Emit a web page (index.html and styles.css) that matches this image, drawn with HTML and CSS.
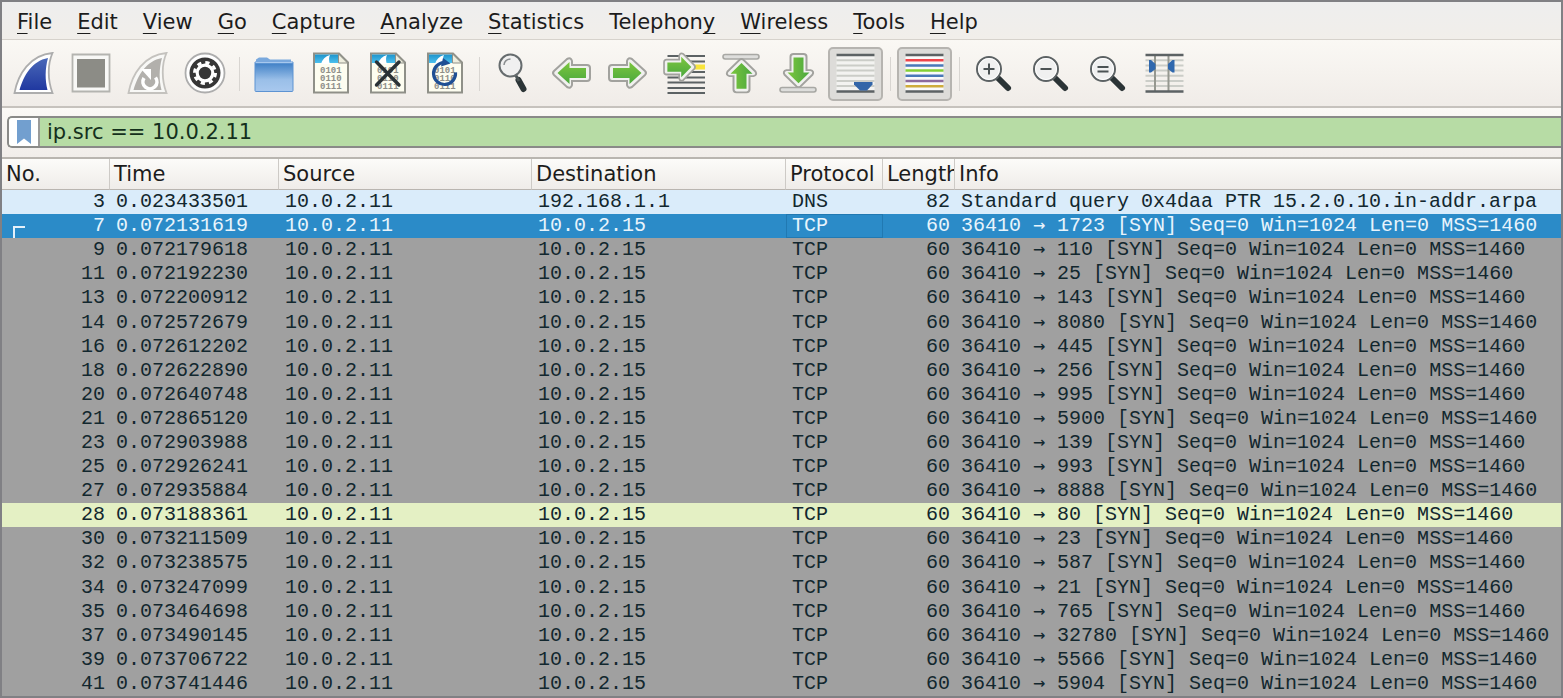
FILE: index.html
```html
<!DOCTYPE html>
<html lang="en">
<head>
<meta charset="utf-8">
<title>Packet capture</title>
<link rel="stylesheet" href="styles.css">
</head>
<body>
<svg class="defs" aria-hidden="true">
  <defs>
    <linearGradient id="g-green" x1="0" y1="0" x2="0" y2="1"><stop offset="0" stop-color="#7cc63e"/><stop offset="1" stop-color="#4aa83e"/></linearGradient>
    <linearGradient id="g-fin" x1="0" y1="0" x2="0" y2="1"><stop offset="0" stop-color="#4a68b8"/><stop offset="1" stop-color="#2038a0"/></linearGradient>
    <linearGradient id="g-folder" x1="0" y1="0" x2="0" y2="1"><stop offset="0" stop-color="#3a7cc4"/><stop offset="0.6" stop-color="#9abfe8"/><stop offset="1" stop-color="#a8c8ee"/></linearGradient>
    <linearGradient id="g-sky" x1="0" y1="0" x2="0" y2="1"><stop offset="0" stop-color="#1e94cc"/><stop offset="1" stop-color="#4cc0ee"/></linearGradient>
    <g id="arrow">
      <path d="M3 16Q3 13 6 13H21V9Q22 5 26 7L39 19Q41 21 39 23L26 35Q22 37 21 33V29H6Q3 29 3 26Z" fill="#f1f1ef" stroke="#a2a29e" stroke-width="2"/>
      <path d="M7 16H23.500V10L35.500 21L23.500 32V26H7Z" fill="url(#g-green)"/>
    </g>
    <g id="doc">
      <path d="M5 1.500H30L39 10.500V40.500H5Z" fill="#fdfdf0" stroke="#8f9088" stroke-width="2"/>
      <path d="M6 2.500H29V11H6Z" fill="url(#g-sky)"/>
      <path d="M12 12Q14 5 21 3Q19 7 21 12Z" fill="#fff"/>
      <path d="M29.500 2V11H38.500Z" fill="#eeeede" stroke="#8f9088"/>
      <text class="bits" x="11" y="21">0101</text>
      <text class="bits" x="11" y="29">0110</text>
      <text class="bits" x="11" y="37">0111</text>
    </g>
    <g id="lens">
      <path d="M27 27L36 36" stroke="#2b3436" stroke-width="6" stroke-linecap="round"/>
      <circle cx="17" cy="17" r="12" fill="#f0f0f0" stroke="#5c6264" stroke-width="2"/>
      <circle cx="17" cy="17" r="10.500" fill="none" stroke="#fff"/>
    </g>
  </defs>
</svg>

<div class="window">
  <nav class="menubar" aria-label="Main menu">
    <button class="menu"><u>F</u>ile</button>
    <button class="menu"><u>E</u>dit</button>
    <button class="menu"><u>V</u>iew</button>
    <button class="menu"><u>G</u>o</button>
    <button class="menu"><u>C</u>apture</button>
    <button class="menu"><u>A</u>nalyze</button>
    <button class="menu"><u>S</u>tatistics</button>
    <button class="menu">Telephon<u>y</u></button>
    <button class="menu"><u>W</u>ireless</button>
    <button class="menu"><u>T</u>ools</button>
    <button class="menu"><u>H</u>elp</button>
  </nav>

  <div class="toolbar" role="toolbar" aria-label="Main toolbar">
    <button class="tool" aria-label="Start capture"><svg class="icon" viewBox="0 0 44 44">
      <path d="M2.500 41C6 22 18 3 40.500 1C35.500 12 35.500 28 40.500 41Z" fill="#fff" stroke="#adadad" stroke-width="1.800"/>
      <path d="M7.500 38C12 23 20 9 36 6C33 17 33 28 35.500 38Z" fill="url(#g-fin)"/></svg></button>
    <button class="tool" aria-label="Stop capture"><svg class="icon" viewBox="0 0 44 44">
      <path d="M3.500 2.500H40.500V39.500H3.500Z" fill="#f8f8f6" stroke="#b4b4b0" stroke-width="1.800"/>
      <path d="M8 7H36V35.500H8Z" fill="#8c8c86"/></svg></button>
    <button class="tool" aria-label="Restart capture"><svg class="icon" viewBox="0 0 44 44">
      <path d="M2.500 41C6 22 18 3 40.500 1C35.500 12 35.500 28 40.500 41Z" fill="#f8f8f6" stroke="#c4c2be" stroke-width="1.800"/>
      <path d="M7.500 38C12 23 20 9 36 6C33 17 33 28 35.500 38Z" fill="#b2b0ac"/>
      <path d="M29.500 25.500A7 7 0 1 1 18 26" fill="none" stroke="#fff" stroke-width="3.600"/>
      <path d="M15 17H25V28Z" fill="#fff"/></svg></button>
    <button class="tool" aria-label="Capture options"><svg class="icon" viewBox="0 0 44 44">
      <circle cx="22" cy="21" r="19.500" fill="#fff" stroke="#adadad" stroke-width="1.800"/>
      <circle cx="22" cy="21" r="15.500" fill="#363636"/>
      <circle cx="22" cy="21" r="10.500" fill="none" stroke="#fff" stroke-width="3" stroke-dasharray="4.200 4.047"/>
      <circle cx="22" cy="21" r="7.800" fill="none" stroke="#fff" stroke-width="3.200"/></svg></button>
    <span class="sep"></span>
    <button class="tool" aria-label="Open file"><svg class="icon" viewBox="0 0 44 44">
      <path d="M4 12V7.500L7 5.500H15L18 7.500H39V12Z" fill="#7aa9dd"/>
      <path d="M3 10H41V38.500Q41 39.500 40 39.500H4Q3 39.500 3 38.500Z" fill="url(#g-folder)" stroke="#5d93d2"/>
      <path d="M3.500 10.500H40.500" stroke="#a7c8ee" stroke-width="1.500"/></svg></button>
    <button class="tool" aria-label="Save file"><svg class="icon" viewBox="0 0 44 44"><use href="#doc"/></svg></button>
    <button class="tool" aria-label="Close file"><svg class="icon" viewBox="0 0 44 44"><use href="#doc"/>
      <path d="M10.500 10L33 33M33 10L10.500 33" stroke="#2a3236" stroke-width="3.400" stroke-linecap="round"/></svg></button>
    <button class="tool" aria-label="Reload file"><svg class="icon" viewBox="0 0 44 44"><use href="#doc"/>
      <path d="M21 10.500A11 11 0 1 0 32.500 20.500" fill="none" stroke="#1f4f94" stroke-width="3.200"/>
      <path d="M20 6L27.500 11.500L18 14.500Z" fill="#1f4f94"/></svg></button>
    <span class="sep"></span>
    <button class="tool" aria-label="Find packet"><svg class="icon" viewBox="0 0 44 44">
      <path d="M26.500 28L31.500 37" stroke="#2b3436" stroke-width="6" stroke-linecap="round"/>
      <path d="M23 22L27 29" stroke="#4b5456" stroke-width="3"/>
      <circle cx="18.500" cy="13.500" r="11" fill="#f0f0f0" stroke="#666c6e" stroke-width="2"/>
      <path d="M12 13Q12.500 7.500 18.500 7" fill="none" stroke="#8a8e90" stroke-width="1.500"/></svg></button>
    <button class="tool" aria-label="Previous packet"><svg class="icon" viewBox="0 0 44 44"><use href="#arrow" transform="matrix(-1 0 0 1 44 0)"/></svg></button>
    <button class="tool" aria-label="Next packet"><svg class="icon" viewBox="0 0 44 44"><use href="#arrow"/></svg></button>
    <button class="tool" aria-label="Go to packet"><svg class="icon" viewBox="0 0 44 44">
      <path d="M4.500 4H42M4.500 9.500H42M4.500 20H42M4.500 25.500H42M4.500 30.500H42M4.500 36H42M4.500 41H42" stroke="#5c6264" stroke-width="2.200"/>
      <path d="M26 15H42" stroke="#f8e43c" stroke-width="5"/>
      <use href="#arrow" transform="matrix(.84 0 0 .93 -1.500 -4.500)"/></svg></button>
    <button class="tool" aria-label="First packet"><svg class="icon" viewBox="0 0 44 44">
      <rect x="3" y="2.500" width="36" height="4.500" rx="2.200" fill="#dededc" stroke="#a8a8a4" stroke-width="1.600"/>
      <use href="#arrow" transform="matrix(0 -.9 1 0 .5 43)"/></svg></button>
    <button class="tool" aria-label="Last packet"><svg class="icon" viewBox="0 0 44 44">
      <use href="#arrow" transform="matrix(0 .9 1 0 .5 -.7)"/>
      <rect x="3" y="35.500" width="36" height="4.500" rx="2.200" fill="#dededc" stroke="#a8a8a4" stroke-width="1.600"/></svg></button>
    <button class="tool tool-on" aria-pressed="true" aria-label="Auto scroll"><svg class="icon" viewBox="0 0 44 44">
      <path d="M2.500 2H40.500V40H2.500Z" fill="#f3f3f1"/>
      <path d="M2.500 8.300H40.500M2.500 13.500H40.500M2.500 18.500H40.500M2.500 23.700H40.500M2.500 29H40.500M2.500 34H40.500" stroke="#cbcdc8" stroke-width="2"/>
      <path d="M2.500 3H40.500M2.500 39.500H40.500" stroke="#5c6264" stroke-width="2.400"/>
      <path d="M20 30H38.500V32.500L33 38.500H26L20 32.500Z" fill="#3265a8"/></svg></button>
    <span class="sep"></span>
    <button class="tool tool-on" aria-pressed="true" aria-label="Colorize packets"><svg class="icon" viewBox="0 0 44 44">
      <path d="M2.500 2H40.500V40H2.500Z" fill="#fafafa"/>
      <path d="M2.500 8.300H40.500" stroke="#f0444a" stroke-width="2.400"/>
      <path d="M2.500 13.500H40.500M2.500 23.700H40.500" stroke="#4a78b8" stroke-width="2.400"/>
      <path d="M2.500 18.500H40.500" stroke="#84d034" stroke-width="2.400"/>
      <path d="M2.500 29H40.500" stroke="#8c6a9c" stroke-width="2.400"/>
      <path d="M2.500 34.200H40.500" stroke="#ceac3c" stroke-width="2.400"/>
      <path d="M2.500 3H40.500M2.500 39.500H40.500" stroke="#5c6264" stroke-width="2.400"/></svg></button>
    <span class="sep"></span>
    <button class="tool" aria-label="Zoom in"><svg class="icon" viewBox="0 0 44 44"><use href="#lens"/><path d="M11.500 17H22.500M17 11.500V22.500" stroke="#4b5254" stroke-width="2"/></svg></button>
    <button class="tool" aria-label="Zoom out"><svg class="icon" viewBox="0 0 44 44"><use href="#lens"/><path d="M11.500 17H22.500" stroke="#4b5254" stroke-width="2"/></svg></button>
    <button class="tool" aria-label="Normal size"><svg class="icon" viewBox="0 0 44 44"><use href="#lens"/><path d="M11.500 15H22.500M11.500 19.500H22.500" stroke="#4b5254" stroke-width="2"/></svg></button>
    <button class="tool" aria-label="Resize columns"><svg class="icon" viewBox="0 0 44 44">
      <path d="M2.500 8.300H40.500M2.500 13.500H40.500M2.500 18.500H40.500M2.500 23.700H40.500M2.500 29H40.500M2.500 34H40.500" stroke="#cbcdc8" stroke-width="2"/>
      <path d="M12 3V39M25.500 3V39" stroke="#969890" stroke-width="2"/>
      <path d="M2.500 3H40.500M2.500 39.500H40.500" stroke="#5c6264" stroke-width="2.400"/>
      <path d="M6 8H8L12.500 12V17L8 20.500H6ZM31.500 8H29.500L25 12V17L29.500 20.500H31.500Z" fill="#3068ae"/></svg></button>
  </div>

  <form class="filterbar">
    <div class="filter">
      <button class="bookmark" type="button" aria-label="Filter bookmarks"><svg class="flag" viewBox="0 0 14 24"><path d="M0 0H14V24L7 18.500L0 24Z" fill="#729fcf"/></svg></button>
      <input class="filter-text" type="text" aria-label="Display filter" value="ip.src == 10.0.2.11">
    </div>
  </form>

  <main class="packets">
    <table class="list">
      <colgroup><col class="c-no"><col class="c-time"><col class="c-source"><col class="c-dest"><col class="c-proto"><col class="c-len"><col></colgroup>
      <thead><tr><th>No.</th><th>Time</th><th>Source</th><th>Destination</th><th>Protocol</th><th>Length</th><th>Info</th></tr></thead>
      <tbody>
        <tr class="dns"><td>3</td><td>0.023433501</td><td>10.0.2.11</td><td>192.168.1.1</td><td>DNS</td><td>82</td><td>Standard query 0x4daa PTR 15.2.0.10.in-addr.arpa</td></tr>
        <tr class="selected"><td><svg class="related" viewBox="0 0 12 12"><path d="M1 12V1H12" fill="none" stroke="#e4f0fa" stroke-width="2"/></svg>7</td><td>0.072131619</td><td>10.0.2.11</td><td>10.0.2.15</td><td class="current">TCP</td><td>60</td><td>36410 <span class="to">→</span> 1723 [SYN] Seq=0 Win=1024 Len=0 MSS=1460</td></tr>
        <tr><td>9</td><td>0.072179618</td><td>10.0.2.11</td><td>10.0.2.15</td><td>TCP</td><td>60</td><td>36410 <span class="to">→</span> 110 [SYN] Seq=0 Win=1024 Len=0 MSS=1460</td></tr>
        <tr><td>11</td><td>0.072192230</td><td>10.0.2.11</td><td>10.0.2.15</td><td>TCP</td><td>60</td><td>36410 <span class="to">→</span> 25 [SYN] Seq=0 Win=1024 Len=0 MSS=1460</td></tr>
        <tr><td>13</td><td>0.072200912</td><td>10.0.2.11</td><td>10.0.2.15</td><td>TCP</td><td>60</td><td>36410 <span class="to">→</span> 143 [SYN] Seq=0 Win=1024 Len=0 MSS=1460</td></tr>
        <tr><td>14</td><td>0.072572679</td><td>10.0.2.11</td><td>10.0.2.15</td><td>TCP</td><td>60</td><td>36410 <span class="to">→</span> 8080 [SYN] Seq=0 Win=1024 Len=0 MSS=1460</td></tr>
        <tr><td>16</td><td>0.072612202</td><td>10.0.2.11</td><td>10.0.2.15</td><td>TCP</td><td>60</td><td>36410 <span class="to">→</span> 445 [SYN] Seq=0 Win=1024 Len=0 MSS=1460</td></tr>
        <tr><td>18</td><td>0.072622890</td><td>10.0.2.11</td><td>10.0.2.15</td><td>TCP</td><td>60</td><td>36410 <span class="to">→</span> 256 [SYN] Seq=0 Win=1024 Len=0 MSS=1460</td></tr>
        <tr><td>20</td><td>0.072640748</td><td>10.0.2.11</td><td>10.0.2.15</td><td>TCP</td><td>60</td><td>36410 <span class="to">→</span> 995 [SYN] Seq=0 Win=1024 Len=0 MSS=1460</td></tr>
        <tr><td>21</td><td>0.072865120</td><td>10.0.2.11</td><td>10.0.2.15</td><td>TCP</td><td>60</td><td>36410 <span class="to">→</span> 5900 [SYN] Seq=0 Win=1024 Len=0 MSS=1460</td></tr>
        <tr><td>23</td><td>0.072903988</td><td>10.0.2.11</td><td>10.0.2.15</td><td>TCP</td><td>60</td><td>36410 <span class="to">→</span> 139 [SYN] Seq=0 Win=1024 Len=0 MSS=1460</td></tr>
        <tr><td>25</td><td>0.072926241</td><td>10.0.2.11</td><td>10.0.2.15</td><td>TCP</td><td>60</td><td>36410 <span class="to">→</span> 993 [SYN] Seq=0 Win=1024 Len=0 MSS=1460</td></tr>
        <tr><td>27</td><td>0.072935884</td><td>10.0.2.11</td><td>10.0.2.15</td><td>TCP</td><td>60</td><td>36410 <span class="to">→</span> 8888 [SYN] Seq=0 Win=1024 Len=0 MSS=1460</td></tr>
        <tr class="http"><td>28</td><td>0.073188361</td><td>10.0.2.11</td><td>10.0.2.15</td><td>TCP</td><td>60</td><td>36410 <span class="to">→</span> 80 [SYN] Seq=0 Win=1024 Len=0 MSS=1460</td></tr>
        <tr><td>30</td><td>0.073211509</td><td>10.0.2.11</td><td>10.0.2.15</td><td>TCP</td><td>60</td><td>36410 <span class="to">→</span> 23 [SYN] Seq=0 Win=1024 Len=0 MSS=1460</td></tr>
        <tr><td>32</td><td>0.073238575</td><td>10.0.2.11</td><td>10.0.2.15</td><td>TCP</td><td>60</td><td>36410 <span class="to">→</span> 587 [SYN] Seq=0 Win=1024 Len=0 MSS=1460</td></tr>
        <tr><td>34</td><td>0.073247099</td><td>10.0.2.11</td><td>10.0.2.15</td><td>TCP</td><td>60</td><td>36410 <span class="to">→</span> 21 [SYN] Seq=0 Win=1024 Len=0 MSS=1460</td></tr>
        <tr><td>35</td><td>0.073464698</td><td>10.0.2.11</td><td>10.0.2.15</td><td>TCP</td><td>60</td><td>36410 <span class="to">→</span> 765 [SYN] Seq=0 Win=1024 Len=0 MSS=1460</td></tr>
        <tr><td>37</td><td>0.073490145</td><td>10.0.2.11</td><td>10.0.2.15</td><td>TCP</td><td>60</td><td>36410 <span class="to">→</span> 32780 [SYN] Seq=0 Win=1024 Len=0 MSS=1460</td></tr>
        <tr><td>39</td><td>0.073706722</td><td>10.0.2.11</td><td>10.0.2.15</td><td>TCP</td><td>60</td><td>36410 <span class="to">→</span> 5566 [SYN] Seq=0 Win=1024 Len=0 MSS=1460</td></tr>
        <tr><td>41</td><td>0.073741446</td><td>10.0.2.11</td><td>10.0.2.15</td><td>TCP</td><td>60</td><td>36410 <span class="to">→</span> 5904 [SYN] Seq=0 Win=1024 Len=0 MSS=1460</td></tr>
      </tbody>
    </table>
  </main>
</div>
</body>
</html>
```

FILE: styles.css
```css
* {
  box-sizing: border-box;
}

body {
  margin: 0;
  font-family: "DejaVu Sans", sans-serif;
  font-size: 21px;
  color: #1c1c1c;
}

button,
input {
  margin: 0;
  padding: 0;
  border: 0;
  background: none;
  font: inherit;
  color: inherit;
}

.defs {
  position: absolute;
  width: 0;
  height: 0;
}

.bits {
  font: bold 9px "Liberation Mono", monospace;
  fill: #8e8e88;
}

.window {
  display: flex;
  flex-direction: column;
  min-height: 100vh;
  border: 2px solid #808084;
  background: #f1eeea;
}

.menubar {
  display: flex;
  gap: 1px;
  padding: 0 3px;
  border-bottom: 1px solid #d6d2cc;
  background: linear-gradient(#eeeeee, #f1eeea);
}

.menu {
  padding: 8px 12px 4px;
  line-height: 25px;
}

.menu u {
  text-decoration-thickness: 1px;
  text-underline-offset: 4px;
}

.toolbar {
  display: flex;
  align-items: center;
  gap: 2px;
  padding: 7px 4px 5px;
  border-bottom: 2px solid #c6c2bd;
  background: linear-gradient(#faf8f4, #f0ece8);
}

.tool {
  display: flex;
  flex: none;
  align-items: center;
  justify-content: center;
  width: 55px;
  height: 54px;
  border: 2px solid transparent;
  border-radius: 5px;
}

.tool-on {
  border-color: #b6b4b0;
  background: #dddcd9;
}

.icon {
  display: block;
  width: 44px;
  height: 44px;
}

.sep {
  flex: none;
  width: 10px;
  height: 34px;
  background: linear-gradient(#d8d5d1, #d8d5d1) center / 1px 100% no-repeat;
}

.filterbar {
  padding: 8px 0 9px 5px;
  border-bottom: 2px solid #b9b5b0;
  background: linear-gradient(#fbf9f6, #f1edea);
}

.filter {
  display: flex;
  height: 32px;
  border: 2px solid #8a8a88;
  border-right: 0;
  border-radius: 5px 0 0 5px;
  background: #b7dca5;
  overflow: hidden;
}

.bookmark {
  display: flex;
  align-items: center;
  justify-content: center;
  width: 31px;
  border-right: 2px solid #9a9a98;
  background: #fff;
}

.flag {
  width: 14px;
  height: 24px;
}

.filter-text {
  flex: 1;
  min-width: 0;
  padding-left: 7px;
  color: #14301c;
  outline: 0;
}

.packets {
  display: flex;
  flex: 1;
  background: #a0a0a0;
}

.list {
  width: 100%;
  table-layout: fixed;
  border-collapse: separate;
  border-spacing: 0;
}

.c-no { width: 108px; }
.c-time { width: 169px; }
.c-source { width: 253px; }
.c-dest { width: 254px; }
.c-proto { width: 97px; }
.c-len { width: 72px; }

.list th {
  height: 31px;
  padding: 1px 0 0 4px;
  border-right: 1px solid #cdcac6;
  border-bottom: 1px solid #b9b5b0;
  background: linear-gradient(#fcfbf9, #efece9);
  font-weight: normal;
  line-height: 25px;
  text-align: left;
  white-space: nowrap;
  overflow: hidden;
}

.list th:last-child {
  border-right: 0;
}

.list td {
  padding: 0 5px 0 6px;
  font: 20px/24px "Liberation Mono", monospace;
  color: #12272e;
  white-space: nowrap;
  overflow: hidden;
}

.list td:last-child {
  padding-right: 0;
}

.list td:nth-child(1),
.list td:nth-child(6) {
  text-align: right;
}

.list .dns td {
  background: #daecfa;
}

.list .http td {
  background: #e4f0c4;
}

.list .selected td {
  background: #2b8bc8;
  color: #e8f4fc;
}

.list .selected .current {
  outline: 1px solid #2179b2;
  outline-offset: -1px;
}

.to {
  font-family: "DejaVu Sans Mono", monospace;
  line-height: 1;
}

.related {
  float: left;
  width: 12px;
  height: 12px;
  margin: 12px 0 0 5px;
}
```
